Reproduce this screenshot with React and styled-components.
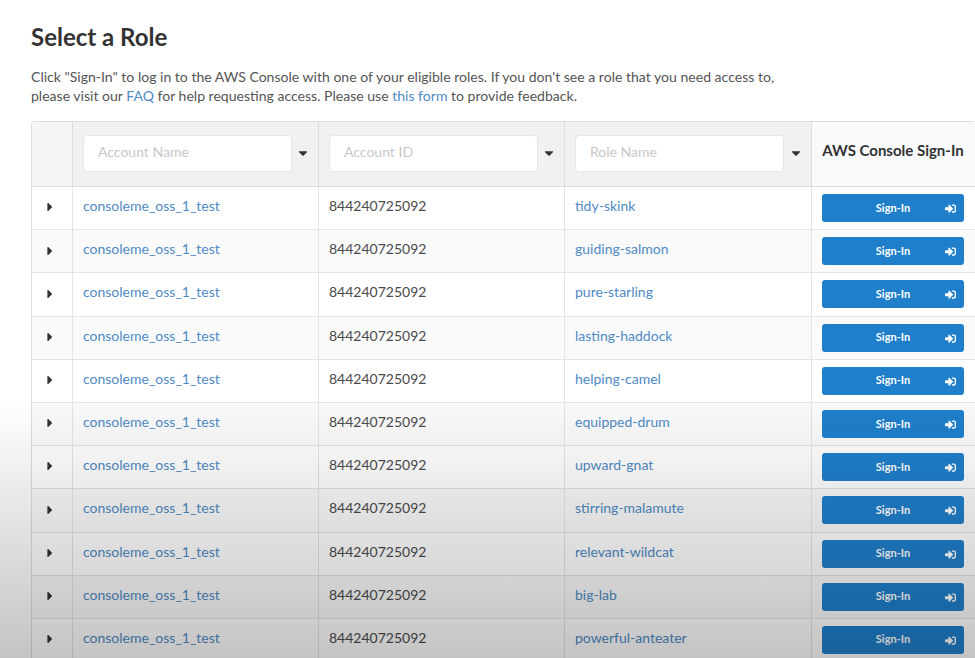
import styled, { createGlobalStyle } from 'styled-components'
import { FaCaretDown, FaCaretRight, FaSignInAlt } from 'react-icons/fa'

const roles = [
  'tidy-skink',
  'guiding-salmon',
  'pure-starling',
  'lasting-haddock',
  'helping-camel',
  'equipped-drum',
  'upward-gnat',
  'stirring-malamute',
  'relevant-wildcat',
  'big-lab',
  'powerful-anteater',
]

const filters = ['Account Name', 'Account ID', 'Role Name']

const App = () => {
  return (
    <Page>
      <GlobalStyle />
      <Title>Select a Role</Title>
      <Intro>
        Click "Sign-In" to log in to the AWS Console with one of your eligible roles. If you don't see a role that you need access to,
        <br />
        please visit our <TextLink href="#">FAQ</TextLink> for help requesting access. Please use <TextLink href="#">this form</TextLink> to provide feedback.
      </Intro>
      <Table>
        <colgroup>
          <col width="41" />
          <col width="246" />
          <col width="246" />
          <col width="247" />
          <col width="164" />
        </colgroup>
        <thead>
          <tr>
            <FilterHead />
            {filters.map((name) => (
              <FilterHead key={name}>
                <FilterBox>
                  <FilterInput placeholder={name} readOnly />
                  <FaCaretDown size={14} color="#333" />
                </FilterBox>
              </FilterHead>
            ))}
            <SignInHead>AWS Console Sign-In</SignInHead>
          </tr>
        </thead>
        <tbody>
          {roles.map((role) => (
            <Row key={role}>
              <ExpandCell>
                <FaCaretRight size={14} color="#333" />
              </ExpandCell>
              <Cell>
                <RowLink href="#">consoleme_oss_1_test</RowLink>
              </Cell>
              <Cell>844240725092</Cell>
              <Cell>
                <RowLink href="#">{role}</RowLink>
              </Cell>
              <ButtonCell>
                <SignInButton>
                  Sign-In
                  <ButtonIcon>
                    <FaSignInAlt size={11} />
                  </ButtonIcon>
                </SignInButton>
              </ButtonCell>
            </Row>
          ))}
        </tbody>
      </Table>
      <BottomShade />
    </Page>
  )
}

export default App

const GlobalStyle = createGlobalStyle`
  html, body {
    margin: 0;
    height: 100%;
    overflow: hidden;
    background: #fff;
  }
  body {
    font-family: Lato, "Open Sans", sans-serif;
    color: #333;
  }
`

const Page = styled.div`
  position: relative;
  width: 975px;
  height: 658px;
  overflow: hidden;
  padding: 22px 0 0 31px;
  box-sizing: border-box;
`

const Title = styled.h1`
  margin: 0;
  font-size: 24px;
  line-height: 30px;
  font-weight: 700;
  color: #333;
`

const Intro = styled.p`
  margin: 15px 0 0;
  font-size: 14.05px;
  line-height: 19px;
  color: #555;
  white-space: nowrap;
`

const TextLink = styled.a`
  color: #4f8ac4;
  text-decoration: none;
`

const Table = styled.table`
  margin-top: 16px;
  width: 944px;
  table-layout: fixed;
  border-collapse: separate;
  border-spacing: 0;
  border-top: 1px solid #dcdddd;
  border-left: 1px solid #dcdddd;
  border-radius: 4px 4px 0 0;
  font-size: 14px;
  color: #4a4a4a;
`

const FilterHead = styled.th`
  height: 65px;
  padding: 0 8px 0 10px;
  background: #f1f1f1;
  border-right: 1px solid #dcdddd;
  border-bottom: 1px solid #dcdddd;
  box-sizing: border-box;
  vertical-align: top;
  &:first-child {
    background: #f5f5f5;
  }
`

const FilterBox = styled.div`
  display: flex;
  align-items: center;
  justify-content: space-between;
  padding-top: 13px;
  svg {
    margin-bottom: 2px;
  }
`

const FilterInput = styled.input`
  width: 209px;
  height: 37px;
  padding: 0 14px 5px;
  box-sizing: border-box;
  background: #fff;
  border: 1px solid #e6e6e6;
  border-radius: 4px;
  font-family: inherit;
  font-size: 14px;
  outline: none;
  &::placeholder {
    color: #c8c8c8;
  }
`

const SignInHead = styled.th`
  padding: 0 2px 8px 0;
  background: #f9fafb;
  border-bottom: 1px solid #dcdddd;
  font-size: 15px;
  font-weight: 700;
  color: #333;
  text-align: center;
  white-space: nowrap;
`

const Row = styled.tr`
  &:nth-child(even) td {
    background: #fafafa;
  }
`

const Cell = styled.td`
  height: 43.2px;
  padding: 0 10px 5px;
  box-sizing: border-box;
  background: #fff;
  border-right: 1px solid #e3e4e4;
  border-bottom: 1px solid #e3e4e4;
  white-space: nowrap;
`

const ExpandCell = styled(Cell)`
  padding: 0 0 5px;
  text-align: center;
  svg {
    vertical-align: middle;
    margin-left: -5px;
  }
`

const ButtonCell = styled(Cell)`
  padding: 0 11px 0 10px;
  border-right: none;
`

const RowLink = styled.a`
  color: #4f8ac4;
  text-decoration: none;
`

const SignInButton = styled.button`
  position: relative;
  display: block;
  width: 142px;
  height: 28px;
  padding: 0 0 2px;
  background: #1f7fcb;
  border: none;
  border-radius: 3px;
  color: #fff;
  font-family: inherit;
  font-size: 11px;
  font-weight: 700;
  text-align: center;
`

const ButtonIcon = styled.span`
  position: absolute;
  top: 0;
  right: 8px;
  display: flex;
  align-items: center;
  height: 100%;
  padding-top: 1px;
  box-sizing: border-box;
`

const BottomShade = styled.div`
  position: absolute;
  left: 0;
  right: 0;
  bottom: 0;
  height: 258px;
  background: linear-gradient(to bottom, rgba(0, 0, 0, 0), rgba(0, 0, 0, 0.23));
  pointer-events: none;
`
